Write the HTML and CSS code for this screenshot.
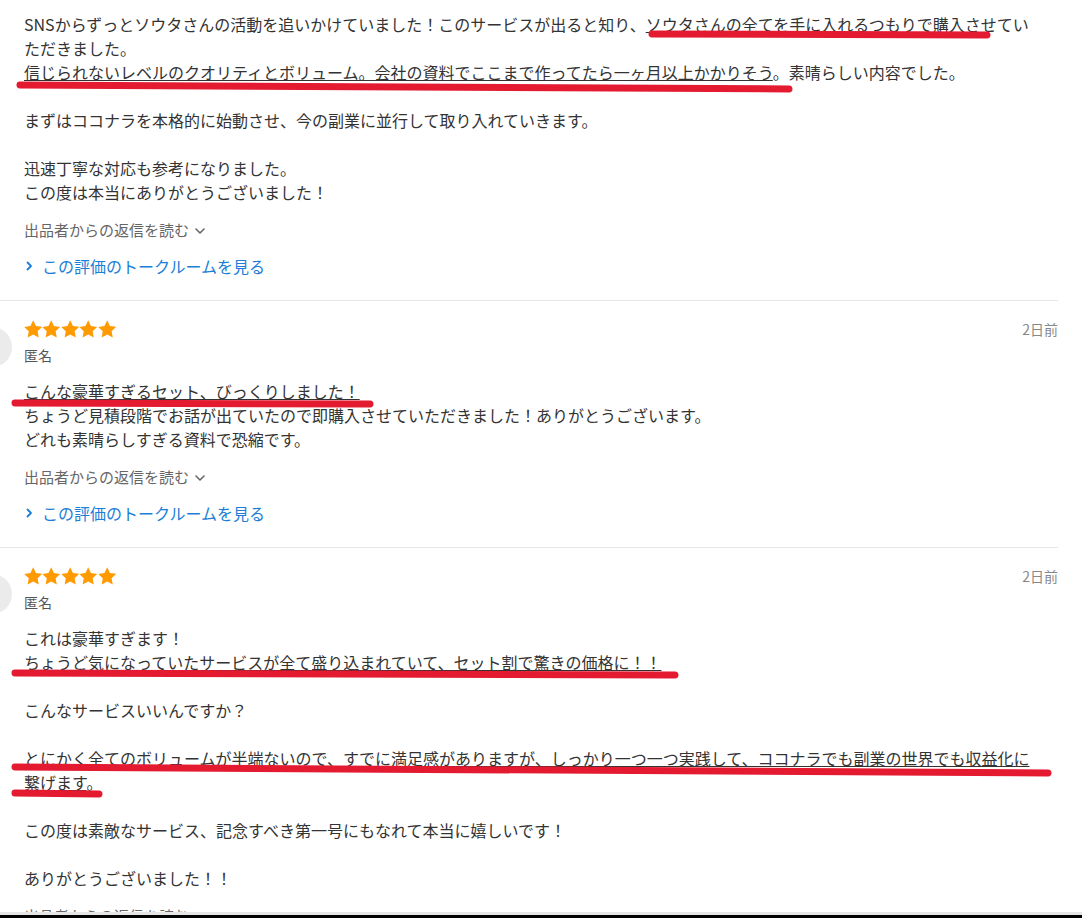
FILE: index.html
```html
<!DOCTYPE html>
<html lang="ja">
<head>
<meta charset="utf-8">
<title>評価一覧</title>
<link rel="stylesheet" href="styles.css">
</head>
<body>
<div class="page">
  <section class="review review--cut">
    <div class="content">
      <p class="text">SNSからずっとソウタさんの活動を追いかけていました！このサービスが出ると知り、<span class="ul">ソウタさんの全てを手に入れるつもりで購入</span>させてい<br>ただきました。<br><span class="ul">信じられないレベルのクオリティとボリューム。会社の資料でここまで作ってたら一ヶ月以上かかりそう</span>。素晴らしい内容でした。<br><br>まずはココナラを本格的に始動させ、今の副業に並行して取り入れていきます。<br><br>迅速丁寧な対応も参考になりました。<br>この度は本当にありがとうございました！</p>
      <div class="reply">出品者からの返信を読む<svg class="chev-down" width="10" height="6" viewBox="0 0 10 6"><polyline points="1,1 5,5 9,1" fill="none" stroke="#666" stroke-width="1.6" stroke-linecap="round" stroke-linejoin="round"/></svg></div>
      <a class="room" href="#"><svg class="chev-right" width="7" height="10" viewBox="0 0 7 10"><polyline points="1.5,1.5 5,5 1.5,8.5" fill="none" stroke="#1c7ed6" stroke-width="1.8" stroke-linecap="round" stroke-linejoin="round"/></svg>この評価のトークルームを見る</a>
    </div>
  </section>

  <section class="review">
    <div class="avatar"></div>
    <div class="content">
      <div class="head">
        <div class="stars">
          <svg viewBox="1.6 1.4 20.8 20"><path d="M12 1.6l3.1 6.5 7 .9-5.1 4.9 1.3 7L12 17.5l-6.3 3.4 1.3-7L1.9 9l7-.9z"/></svg>
          <svg viewBox="1.6 1.4 20.8 20"><path d="M12 1.6l3.1 6.5 7 .9-5.1 4.9 1.3 7L12 17.5l-6.3 3.4 1.3-7L1.9 9l7-.9z"/></svg>
          <svg viewBox="1.6 1.4 20.8 20"><path d="M12 1.6l3.1 6.5 7 .9-5.1 4.9 1.3 7L12 17.5l-6.3 3.4 1.3-7L1.9 9l7-.9z"/></svg>
          <svg viewBox="1.6 1.4 20.8 20"><path d="M12 1.6l3.1 6.5 7 .9-5.1 4.9 1.3 7L12 17.5l-6.3 3.4 1.3-7L1.9 9l7-.9z"/></svg>
          <svg viewBox="1.6 1.4 20.8 20"><path d="M12 1.6l3.1 6.5 7 .9-5.1 4.9 1.3 7L12 17.5l-6.3 3.4 1.3-7L1.9 9l7-.9z"/></svg>
        </div>
        <span class="date">2日前</span>
      </div>
      <div class="name">匿名</div>
      <p class="text body"><span class="ul">こんな豪華すぎるセット、びっくりしました！</span><br>ちょうど見積段階でお話が出ていたので即購入させていただきました！ありがとうございます。<br>どれも素晴らしすぎる資料で恐縮です。</p>
      <div class="reply">出品者からの返信を読む<svg class="chev-down" width="10" height="6" viewBox="0 0 10 6"><polyline points="1,1 5,5 9,1" fill="none" stroke="#666" stroke-width="1.6" stroke-linecap="round" stroke-linejoin="round"/></svg></div>
      <a class="room" href="#"><svg class="chev-right" width="7" height="10" viewBox="0 0 7 10"><polyline points="1.5,1.5 5,5 1.5,8.5" fill="none" stroke="#1c7ed6" stroke-width="1.8" stroke-linecap="round" stroke-linejoin="round"/></svg>この評価のトークルームを見る</a>
    </div>
  </section>

  <section class="review">
    <div class="avatar"></div>
    <div class="content">
      <div class="head">
        <div class="stars">
          <svg viewBox="1.6 1.4 20.8 20"><path d="M12 1.6l3.1 6.5 7 .9-5.1 4.9 1.3 7L12 17.5l-6.3 3.4 1.3-7L1.9 9l7-.9z"/></svg>
          <svg viewBox="1.6 1.4 20.8 20"><path d="M12 1.6l3.1 6.5 7 .9-5.1 4.9 1.3 7L12 17.5l-6.3 3.4 1.3-7L1.9 9l7-.9z"/></svg>
          <svg viewBox="1.6 1.4 20.8 20"><path d="M12 1.6l3.1 6.5 7 .9-5.1 4.9 1.3 7L12 17.5l-6.3 3.4 1.3-7L1.9 9l7-.9z"/></svg>
          <svg viewBox="1.6 1.4 20.8 20"><path d="M12 1.6l3.1 6.5 7 .9-5.1 4.9 1.3 7L12 17.5l-6.3 3.4 1.3-7L1.9 9l7-.9z"/></svg>
          <svg viewBox="1.6 1.4 20.8 20"><path d="M12 1.6l3.1 6.5 7 .9-5.1 4.9 1.3 7L12 17.5l-6.3 3.4 1.3-7L1.9 9l7-.9z"/></svg>
        </div>
        <span class="date">2日前</span>
      </div>
      <div class="name">匿名</div>
      <p class="text body">これは豪華すぎます！<br><span class="ul">ちょうど気になっていたサービスが全て盛り込まれていて、セット割で驚きの価格に！！</span><br><br>こんなサービスいいんですか？<br><br><span class="ul">とにかく全てのボリュームが半端ないので、すでに満足感がありますが、しっかり一つ一つ実践して、ココナラでも副業の世界でも収益化に</span><br><span class="ul">繋げます</span>。<br><br>この度は素敵なサービス、記念すべき第一号にもなれて本当に嬉しいです！<br><br>ありがとうございました！！</p>
      <div class="reply">出品者からの返信を読む<svg class="chev-down" width="10" height="6" viewBox="0 0 10 6"><polyline points="1,1 5,5 9,1" fill="none" stroke="#666" stroke-width="1.6" stroke-linecap="round" stroke-linejoin="round"/></svg></div>
      <a class="room" href="#"><svg class="chev-right" width="7" height="10" viewBox="0 0 7 10"><polyline points="1.5,1.5 5,5 1.5,8.5" fill="none" stroke="#1c7ed6" stroke-width="1.8" stroke-linecap="round" stroke-linejoin="round"/></svg>この評価のトークルームを見る</a>
    </div>
  </section>

  <svg class="marker" width="1082" height="918" viewBox="0 0 1082 918">
    <g fill="none" stroke="#e31a30" stroke-width="7" stroke-linecap="round">
      <path d="M652 34 L987 35"/>
      <path d="M20 85 L789 89"/>
      <path d="M15 403 L370 404"/>
      <path d="M15 673 L675 675"/>
      <path d="M15 767 L1048 773"/>
      <path d="M15 793 L99 794"/>
    </g>
  </svg>
</div>
<div class="window-edge"></div>
</body>
</html>
```

FILE: styles.css
```css
* {
  box-sizing: border-box;
}

html, body {
  margin: 0;
  padding: 0;
  background: #fff;
}

body {
  font-family: "Noto Sans CJK JP", "Noto Sans", sans-serif;
  color: #333;
  overflow-x: hidden;
}

.page {
  position: relative;
  width: 1058px;
}

.review {
  display: flex;
  align-items: flex-start;
  gap: 12px;
  padding: 19px 0 22px 0;
  border-bottom: 1px solid #e6e6e6;
}

.review--cut {
  padding: 12px 0 22px 24px;
}

.avatar {
  flex: none;
  width: 40px;
  height: 40px;
  margin-left: -28px;
  margin-top: 7px;
  border-radius: 50%;
  background: #ebebeb;
}

.content {
  flex: 1;
  min-width: 0;
}

.head {
  display: flex;
  justify-content: space-between;
  align-items: center;
  height: 18px;
}

.stars {
  display: flex;
  gap: 0;
}

.stars svg {
  width: 18.4px;
  height: 18px;
  fill: #ff9a00;
}

.date {
  font-size: 14px;
  line-height: 18px;
  color: #888;
}

.name {
  margin-top: 7px;
  font-size: 14px;
  line-height: 20px;
  color: #555;
}

.text {
  margin: 0;
  font-size: 16px;
  line-height: 24px;
  color: #333;
}

.text.body {
  margin-top: 14px;
}

.ul {
  text-decoration: underline;
  text-decoration-thickness: 1px;
  text-underline-offset: 1px;
}

.reply {
  margin-top: 16px;
  font-size: 15px;
  line-height: 20px;
  color: #666;
  display: flex;
  align-items: center;
}

.chev-down {
  margin-left: 6px;
  margin-top: 1px;
}

.room {
  margin-top: 14px;
  display: flex;
  align-items: center;
  gap: 9px;
  font-size: 16px;
  line-height: 24px;
  color: #1c7ed6;
  text-decoration: none;
}

.chev-right {
  margin-left: 2px;
}

.marker {
  position: absolute;
  top: 0;
  left: 0;
  pointer-events: none;
}

.window-edge {
  position: fixed;
  left: 0;
  right: 0;
  bottom: 0;
  height: 6px;
  background: #000;
  border-top: 3px solid #e6e6e6;
}
```
